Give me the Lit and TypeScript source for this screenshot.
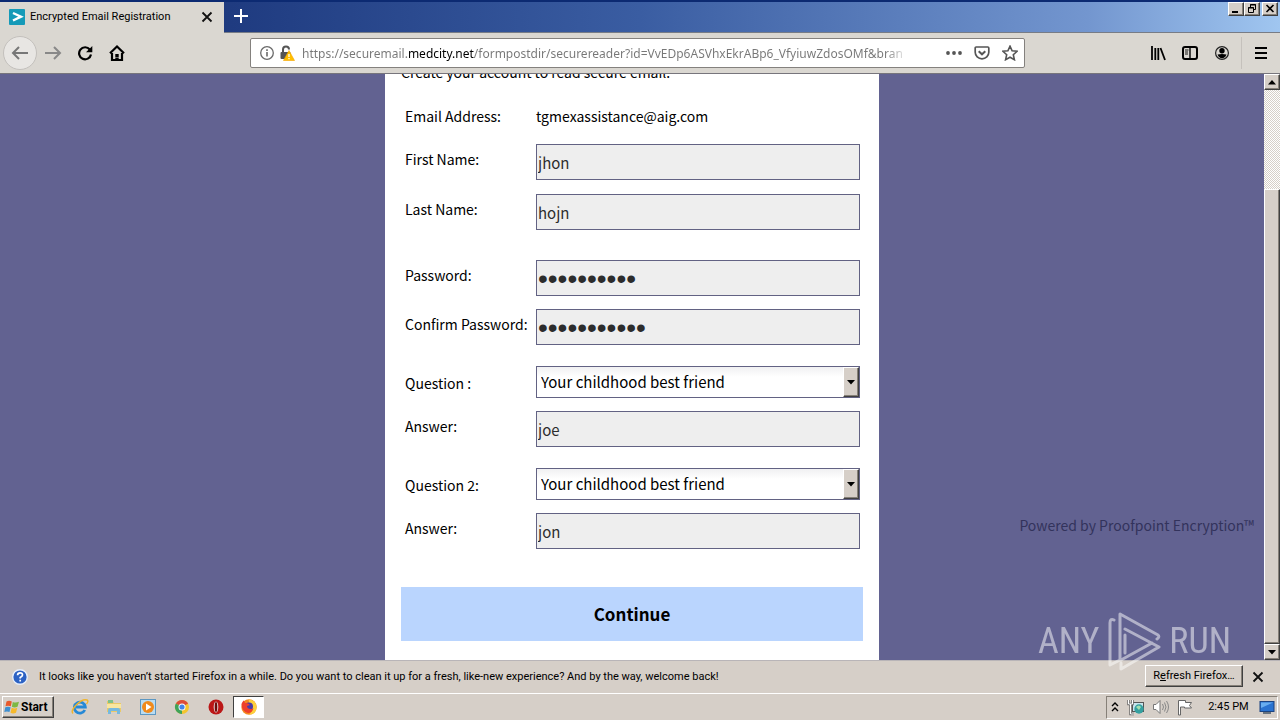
import { LitElement, html, css, svg } from "lit";
import { customElement, property } from "lit/decorators.js";

const bevel = css`
  .raised {
    background: #d6cfc8;
    border: 1px solid;
    border-color: #fff #404040 #404040 #fff;
    box-shadow: inset -1px -1px 0 #868078;
    color: #000;
  }
`;

@customElement("browser-bar")
export class BrowserBar extends LitElement {
  static styles = [
    bevel,
    css`
      :host { display: block; font: 11px/16px Roboto, sans-serif; color: #000; }
      * { box-sizing: border-box; }
      button { font: inherit; padding: 0; border: 0; background: none; color: #000; display: grid; place-items: center; }
      svg { display: block; }
      .strip { display: flex; align-items: stretch; height: 33px; background: linear-gradient(90deg, #0a246a 0, #1f3b80 18%, #3a5da2 50%, #7396cf 85%, #a0c6f0 100%); border-top: 2px solid #0c2a72; }
      .tab { display: flex; align-items: center; width: 224px; padding: 0 7px 1px 9px; background: #dad7d1; gap: 5px; }
      .title { flex: 1; white-space: nowrap; }
      .new { width: 33px; padding-bottom: 3px; }
      .drag { flex: 1; border-bottom: 1px solid #777c86; }
      .new { border-bottom: 1px solid #777c86; }
      .windowbox { display: flex; align-items: flex-start; border-bottom: 1px solid #777c86; padding-right: 2px; }
      .windowbox button { width: 16px; height: 14px; }
      .windowbox button:last-child { margin-left: 2px; }
      .tools { display: flex; align-items: center; height: 41px; background: #dad7d1; border-bottom: 1px solid #77757c; padding: 0 3px; }
      .tools > button { width: 32px; height: 32px; }
      .tools > .back { width: 34px; height: 34px; border-radius: 50%; background: #e8e6e3; border: 1px solid #c3c0bc; }
      .url { flex: 1; display: flex; align-items: center; height: 30px; margin: 0 117px; border: 1px solid #84817e; border-radius: 2px; background: #fff; padding: 0 0 0 6px; }
      .url button { width: 20px; height: 28px; }
      .url .act { width: 28px; }
      .address { flex: 1; min-width: 0; height: 28px; border: 0; outline: 0; padding: 0; margin: 0 31px 0 5px; font: 12px/20px "Noto Sans", sans-serif; color: transparent; background: linear-gradient(90deg, #777 106px, #000 106px 172px, #777 172px, #777 calc(100% - 24px), #fff 100%); -webkit-background-clip: text; background-clip: text; }
      .gap { width: 1px; height: 32px; background: #c5c1bc; margin: 0 3px; }
    `,
  ];

  render() {
    return html`
      <div class="strip">
        <div class="tab">
          <svg width="16" height="16"><rect width="16" height="16" rx="1" fill="#159ab8"/><path d="M4 4l8 3.7-8 3.8" fill="none" stroke="#fff" stroke-width="2.4"/></svg>
          <span class="title">Encrypted Email Registration</span>
          <button aria-label="Close tab"><svg width="20" height="16"><path d="M5.5 3.5l9 9M14.5 3.5l-9 9" stroke="#111" stroke-width="1.8"/></svg></button>
        </div>
        <button class="new" aria-label="New tab"><svg width="16" height="16"><path d="M8 1v14M1 8h14" stroke="#fff" stroke-width="2"/></svg></button>
        <div class="drag"></div>
        <div class="windowbox">
          <button class="raised" aria-label="Minimize"><svg width="14" height="12"><path d="M3 9h6" stroke="#000" stroke-width="2"/></svg></button>
          <button class="raised" aria-label="Restore"><svg width="14" height="12"><path d="M5.5 4V1.5h5v5H8.500M5 2h6M3.500 4.500h5v5h-5zM3 5h6" fill="none" stroke="#000"/></svg></button>
          <button class="raised" aria-label="Close"><svg width="14" height="12"><path d="M3.500 2l7 7M10.500 2l-7 7" stroke="#000" stroke-width="1.6"/></svg></button>
        </div>
      </div>
      <div class="tools">
        <button class="back" aria-label="Back"><svg width="18" height="16"><path d="M17 8H2M8 2L2 8l6 6" fill="none" stroke="#777" stroke-width="2"/></svg></button>
        <button aria-label="Forward"><svg width="18" height="16"><path d="M1 8h15M10 2l6 6-6 6" fill="none" stroke="#888" stroke-width="2"/></svg></button>
        <button aria-label="Reload"><svg width="16" height="16"><path d="M12.800 4.500A6 6 0 1 0 14 9.500" fill="none" stroke="#000" stroke-width="2.200"/><path d="M15.300 1v6.300H9z"/></svg></button>
        <button aria-label="Home"><svg width="16" height="16"><path d="M1 8.200L8 1.500l7 6.700M3 8v7h10V8" fill="none" stroke="#000" stroke-width="2.200"/><path d="M6.300 9h3.400v3H6.300zM6.300 12.500h3.400V15H6.300z"/></svg></button>
        <div class="url">
          <button aria-label="Site information"><svg width="16" height="16"><circle cx="8" cy="8" r="6.300" fill="none" stroke="#6a6a6a" stroke-width="1.300"/><path d="M8 7v4.500M8 4.300V6" stroke="#6a6a6a" stroke-width="1.600"/></svg></button>
          <button aria-label="Connection security"><svg width="16" height="16"><path d="M4 8V4.500a3 3 0 0 1 6 0" fill="none" stroke="#555" stroke-width="2"/><rect x="1.500" y="7" width="10" height="7" rx="1" fill="#555"/><path d="M10 5.500L15.500 15.500H4.500z" fill="#ffbf00" stroke="#f5a400" stroke-width=".6"/><path d="M10 9v3M10 13v1.300" stroke="#fff" stroke-width="1.300"/></svg></button>
          <input class="address" type="text" aria-label="Address" .value=${"https://securemail.medcity.net/formpostdir/securereader?id=VvEDp6ASVhxEkrABp6_VfyiuwZdosOMf&bran"} />
          <button class="act" aria-label="Page actions"><svg width="16" height="16" fill="#555"><circle cx="2" cy="8" r="1.900"/><circle cx="8" cy="8" r="1.900"/><circle cx="14" cy="8" r="1.900"/></svg></button>
          <button class="act" aria-label="Save to Pocket"><svg width="16" height="16" fill="none" stroke="#555" stroke-width="1.700"><path d="M1.200 3Q1.200 2 2.200 2h11.600q1 0 1 1v4.300a6.800 6.500 0 0 1-13.600 0z"/><path d="M4.700 6.300L8 9.300l3.300-3" stroke-width="2"/></svg></button>
          <button class="act" aria-label="Bookmark"><svg width="16" height="16"><path d="M8 1.200l2.100 4.600 5 .5-3.800 3.400 1.100 5L8 12.200l-4.400 2.500 1.100-5L.9 6.300l5-.5z" fill="none" stroke="#555" stroke-width="1.600"/></svg></button>
        </div>
        <button aria-label="Library"><svg width="16" height="16"><path d="M2 1v14M5.300 3v12M8.300 3v12" stroke="#000" stroke-width="1.800"/><path d="M10.500 3l4.500 12" stroke="#000" stroke-width="1.800"/></svg></button>
        <button aria-label="Sidebars"><svg width="16" height="16"><rect x="1" y="2" width="14" height="12" rx="2" fill="none" stroke="#000" stroke-width="2"/><path d="M8 2v12" stroke="#000" stroke-width="1.400"/><path d="M3 5h3.500M3 7h3M3 9h3" stroke="#000" stroke-width=".9"/></svg></button>
        <button aria-label="Account"><svg width="16" height="16"><circle cx="8" cy="8" r="6.400" fill="none" stroke="#222" stroke-width="1.200"/><circle cx="8" cy="5.800" r="2.700"/><path d="M3.500 9.500Q8 8.500 12.500 9.500 11 13.300 8 13.300T3.500 9.500z"/></svg></button>
        <span class="gap"></span>
        <button aria-label="Menu"><svg width="14" height="16"><path d="M1 3h12M1 8h12M1 13h12" stroke="#000" stroke-width="2"/></svg></button>
      </div>
    `;
  }
}

@customElement("register-page")
export class RegisterPage extends LitElement {
  static styles = [
    bevel,
    css`
      :host { display: flex; min-height: 0; overflow: hidden; background: #626291; color: #000; font: 14px/20px "Noto Sans CJK SC", sans-serif; }
      * { box-sizing: border-box; }
      .page { flex: 1; display: grid; grid-template-columns: 1fr 494px 1fr; min-height: 0; }
      .panel { grid-column: 2; background: #fff; padding: 0 16px; margin-top: -12px; }
      .intro { margin: 0 0 24px; }
      .row { display: grid; grid-template-columns: 131px 324px; align-items: center; padding-left: 4px; margin-bottom: 14px; }
      .row label { padding-bottom: 6px; white-space: nowrap; }
      .row.ask label { padding: 2px 0 0; }
      .row.wide { margin-bottom: 30px; }
      .row.group { margin-bottom: 21px; }
      .row.tight { margin-bottom: 13px; }
      .row.mail { margin-bottom: 18px; }
      .row.mail label { padding: 0; }
      input, select { width: 100%; border: 1px solid #626283; border-radius: 0; outline: 0; margin: 0; font: inherit; font-size: 15px; }
      input { height: 36px; padding: 0 1px; background: #eee; color: #2c2c2c; }
      input[type="password"] { font: 28px/32px "Liberation Sans", sans-serif; padding-top: 2px; }
      .pick { position: relative; display: block; }
      select { display: block; height: 32px; appearance: none; padding: 0 20px 0 4px; color: #000; background: linear-gradient(#f0f0f2, #fff 10px); }
      .drop { position: absolute; right: 1px; top: 1px; bottom: 1px; width: 16px; display: grid; place-items: center; pointer-events: none; }
      form { margin: 0; }
      .submit { display: block; width: 100%; height: 54px; margin-top: 38px; border: 0; background: #bad5fe; font: bold 17px/24px "Noto Sans CJK SC", sans-serif; color: #000; }
      .powered { align-self: end; justify-self: end; margin: 0 10px 125px 0; color: #33335c; white-space: nowrap; }
      .scroll { width: 16px; display: flex; flex-direction: column; background: repeating-conic-gradient(#fff 0 25%, #d6cfc8 0 50%) 0 0 / 2px 2px; }
      .scroll button { height: 16px; padding: 0; display: grid; place-items: center; }
      .track { flex: 1; display: flex; flex-direction: column; padding-top: 99px; }
      .thumb { flex: 1; }
    `,
  ];

  private field(id: string, label: string, value: string, size = "", type = "text") {
    return html`<div class="row ${size}"><label for=${id}>${label}</label><input id=${id} type=${type} .value=${value} /></div>`;
  }

  private question(id: string, label: string) {
    return html`<div class="row ask tight"><label for=${id}>${label}</label>
      <span class="pick"><select id=${id}><option>Your childhood best friend</option></select>
      <span class="drop raised"><svg width="8" height="5"><path d="M0 0h8L4 4.500z"/></svg></span></span></div>`;
  }

  render() {
    return html`
      <div class="page">
        <main class="panel">
          <p class="intro">Create your account to read secure email.</p>
          <form @submit=${(e: Event) => e.preventDefault()}>
            <div class="row mail"><label>Email Address:</label><span>tgmexassistance@aig.com</span></div>
            ${this.field("first", "First Name:", "jhon")}
            ${this.field("last", "Last Name:", "hojn", "wide")}
            ${this.field("pass", "Password:", "abcdefghij", "tight", "password")}
            ${this.field("confirm", "Confirm Password:", "abcdefghijk", "group", "password")}
            ${this.question("q1", "Question :")}
            ${this.field("a1", "Answer:", "joe", "group")}
            ${this.question("q2", "Question 2:")}
            ${this.field("a2", "Answer:", "jon")}
            <button class="submit">Continue</button>
          </form>
        </main>
        <div class="powered">Powered by Proofpoint Encryption™</div>
      </div>
      <div class="scroll">
        <button class="raised" aria-label="Scroll up"><svg width="8" height="5"><path d="M0 4.500h8L4 0z"/></svg></button>
        <div class="track"><div class="thumb raised"></div></div>
        <button class="raised" aria-label="Scroll down"><svg width="8" height="5"><path d="M0 0h8L4 4.500z"/></svg></button>
      </div>
    `;
  }
}

@customElement("bottom-bars")
export class BottomBars extends LitElement {
  static styles = [
    bevel,
    css`
      :host { display: block; background: #d6cfc8; color: #000; font: 11px/14px Roboto, sans-serif; }
      * { box-sizing: border-box; }
      button { font: inherit; padding: 0; }
      svg { display: block; }
      .notice { height: 33px; display: flex; align-items: center; gap: 11px; padding: 0 12px; border-top: 1px solid #b9b5b8; }
      .text { flex: 1; }
      .refresh { width: 98px; height: 22px; margin-top: -2px; }
      .plain { border: 0; background: none; width: 16px; display: grid; place-items: center; margin: 0 2px 0 -4px; }
      .tasks { height: 27px; display: flex; align-items: center; border-top: 1px solid #fff; padding: 0 2px; }
      .start { display: flex; align-items: center; gap: 1px; width: 52px; height: 22px; font-weight: bold; font-size: 12px; padding-left: 1px; margin-right: 10px; }
      .app { border: 0; background: none; width: 31px; height: 22px; display: grid; place-items: center; margin-right: 3px; }
      .app.on { background: #fff; border: 1px solid; border-color: #404040 #fff #fff #404040; margin-left: -1px; }
      .tray { margin-left: auto; width: 172px; height: 23px; display: flex; align-items: center; border: 1px solid; border-color: #868078 #fff #fff #868078; padding: 0 2px; justify-content: space-between; }
      .clock { margin: 0 4px 0 8px; }
    `,
  ];

  private app(name: string, art: unknown, on = false) {
    return html`<button class="app ${on ? "on" : ""}" aria-label=${name}><svg width="18" height="18" viewBox="0 0 18 18">${art}</svg></button>`;
  }

  render() {
    return html`
      <div class="notice">
        <svg width="16" height="16"><circle cx="8" cy="8" r="7.300" fill="#2c62c4" stroke="#e6eefa" stroke-width="1.400"/><path d="M5.600 6.200Q5.600 3.800 8.100 3.800T10.500 6Q10.500 7.200 8.200 8.400V9.500M8.200 10.800v1.800" fill="none" stroke="#fff" stroke-width="1.700"/></svg>
        <span class="text">It looks like you haven’t started Firefox in a while. Do you want to clean it up for a fresh, like-new experience? And by the way, welcome back!</span>
        <button class="refresh raised">R<u>e</u>fresh Firefox…</button>
        <button class="plain" aria-label="Dismiss"><svg width="12" height="12"><path d="M1.500 1.500l9 9M10.500 1.500l-9 9" stroke="#111" stroke-width="1.800"/></svg></button>
      </div>
      <div class="tasks">
        <button class="start raised"><svg width="16" height="16"><path d="M2.500 2.500Q5 .8 7.800 2.500L6.800 7.300Q4 6 1.500 7.300z" fill="#e8592b"/><path d="M8.800 3Q11.500 4.300 15 2.800L13.500 7.800Q10.500 9 7.900 7.800z" fill="#7db843"/><path d="M1.300 8.300Q4 7 6.600 8.300L5.500 13Q3 11.800.3 13z" fill="#3e8fd0"/><path d="M7.700 8.800q3 1.200 5.600 0L12 13.800q-3 1.200-5.500 0z" fill="#f6b92b"/></svg>Start</button>
        ${this.app("Internet Explorer", svg`<path d="M13.800 12A5.500 5.500 0 1 1 14.300 9H5" fill="none" stroke="#2689d6" stroke-width="2.800"/><path d="M2 15.500C-1.500 12 10 0 16 2q2 1-.5 4" fill="none" stroke="#f0b42b" stroke-width="1.400"/>`)}
        ${this.app("Explorer", svg`<path d="M2 3h6l1 2h7v9H2z" fill="#eac968"/><path d="M3 2h5v3H3z" fill="#7ec18a"/><path d="M2 6h14v4H2z" fill="#f8e6a0"/><path d="M3 16v-4q0-2 2-2h8q2 0 2 2v4h-3v-3H6v3z" fill="#76b9df"/>`)}
        ${this.app("Media Player", svg`<rect x="1.500" y="1.500" width="15" height="15" fill="#b9dcf2" stroke="#5c97c2"/><circle cx="9" cy="9" r="6" fill="#f08a1c"/><path d="M7 5.500v7l5.500-3.500z" fill="#fff"/>`)}
        ${this.app("Chrome", svg`<circle cx="9" cy="9" r="7" fill="#f4c52f"/><path d="M9 9L2.900 5.500A7 7 0 0 1 15.100 5.500z" fill="#dd4b39"/><path d="M9 9L2.900 5.500A7 7 0 0 0 9 16z" fill="#3fa35a"/><circle cx="9" cy="9" r="3.500" fill="#fff"/><circle cx="9" cy="9" r="2.600" fill="#4484e8"/>`)}
        ${this.app("Opera", svg`<ellipse cx="9" cy="9" rx="7.500" ry="7.500" fill="#bb1717"/><ellipse cx="9" cy="9" rx="2.300" ry="5.500" fill="#e9dedc"/><ellipse cx="9" cy="9" rx="1.300" ry="5" fill="#6d0b0b"/>`)}
        ${this.app("Firefox", svg`<circle cx="9" cy="9" r="7.700" fill="#f5871f"/><path d="M9 1.500Q16 2 16.500 9T9 16.500Q14 12 11 8T9 1.500" fill="#fcd03c"/><circle cx="9" cy="8.500" r="4" fill="#4a3aa8"/><path d="M1.500 6Q3 2.500 4 2.500L5 5q3-.5 5 2L7 8q0 3 4 3 2 0 2.500-1Q12.500 15 8 15 2 14 1.500 6z" fill="#ee3f2b"/>`, true)}
        <div class="tray">
          <svg width="12" height="14"><path d="M3 6l3-3 3 3M3 11l3-3 3 3" fill="none" stroke="#000" stroke-width="1.400"/></svg>
          <svg width="18" height="18"><rect x="5.500" y="4.500" width="11" height="9" fill="#c8e5ee" stroke="#555"/><circle cx="12" cy="11" r="4.700" fill="#35a0a0"/><path d="M9 9q3-3 5 0l-2 3z" fill="#a5e0b0"/><path d="M1.500 2v4h4V2M3.500 6v10H7" fill="none" stroke="#666" stroke-width="2.400"/><path d="M1.500 2v4h4V2M3.500 6v10H7" fill="none" stroke="#fff"/></svg>
          <svg width="18" height="18"><path d="M1.500 6.500H4l4-4v13l-4-4H1.500z" fill="#fff" stroke="#777"/><path d="M10.500 6q2 3 0 6M12.500 4.500q3 4.500 0 9M14.500 3q4 6 0 12" fill="none" stroke="#888"/></svg>
          <svg width="18" height="18"><path d="M2.500 17V2.500h7v2h6l-2 3 2 2.500h-7V9H4.500v8z" fill="#fff" stroke="#666"/></svg>
          <span class="clock">2:45 PM</span>
          <svg width="16" height="16"><rect x="1" y="2.500" width="14" height="10" fill="#2a73d0" stroke="#1b4380"/><path d="M2 3.500h12L2 9z" fill="#68aef0"/><path d="M4 14h8" stroke="#456" stroke-width="1.500"/></svg>
        </div>
      </div>
    `;
  }
}

@customElement("app-root")
export class AppRoot extends LitElement {
  @property() brand = "ANY RUN";

  static styles = css`
    :host { position: relative; display: grid; grid-template-columns: minmax(0, 1fr); grid-template-rows: auto minmax(0, 1fr) auto; height: 100vh; overflow: hidden; }
    .mark { position: absolute; right: 49px; bottom: 48px; display: flex; align-items: center; gap: 8px; color: #fff; opacity: .5; font: 36px/40px "Roboto Condensed", Roboto, sans-serif; pointer-events: none; }
    svg { display: block; }
  `;

  render() {
    const [left, right] = this.brand.split(" ");
    return html`
      <browser-bar></browser-bar>
      <register-page></register-page>
      <bottom-bars></bottom-bars>
      <div class="mark">
        <span>${left}</span>
        <svg width="54" height="62" fill="none" stroke="#fff" stroke-width="3" stroke-linejoin="round" stroke-linecap="round"><path d="M7 10Q3 8 3 13v42l10-5V4l38 21q2 2-1 4M18 19l34 18-38 22v-6M14 50l31-17M18 25v18"/></svg>
        <span>${right}</span>
      </div>
    `;
  }
}
